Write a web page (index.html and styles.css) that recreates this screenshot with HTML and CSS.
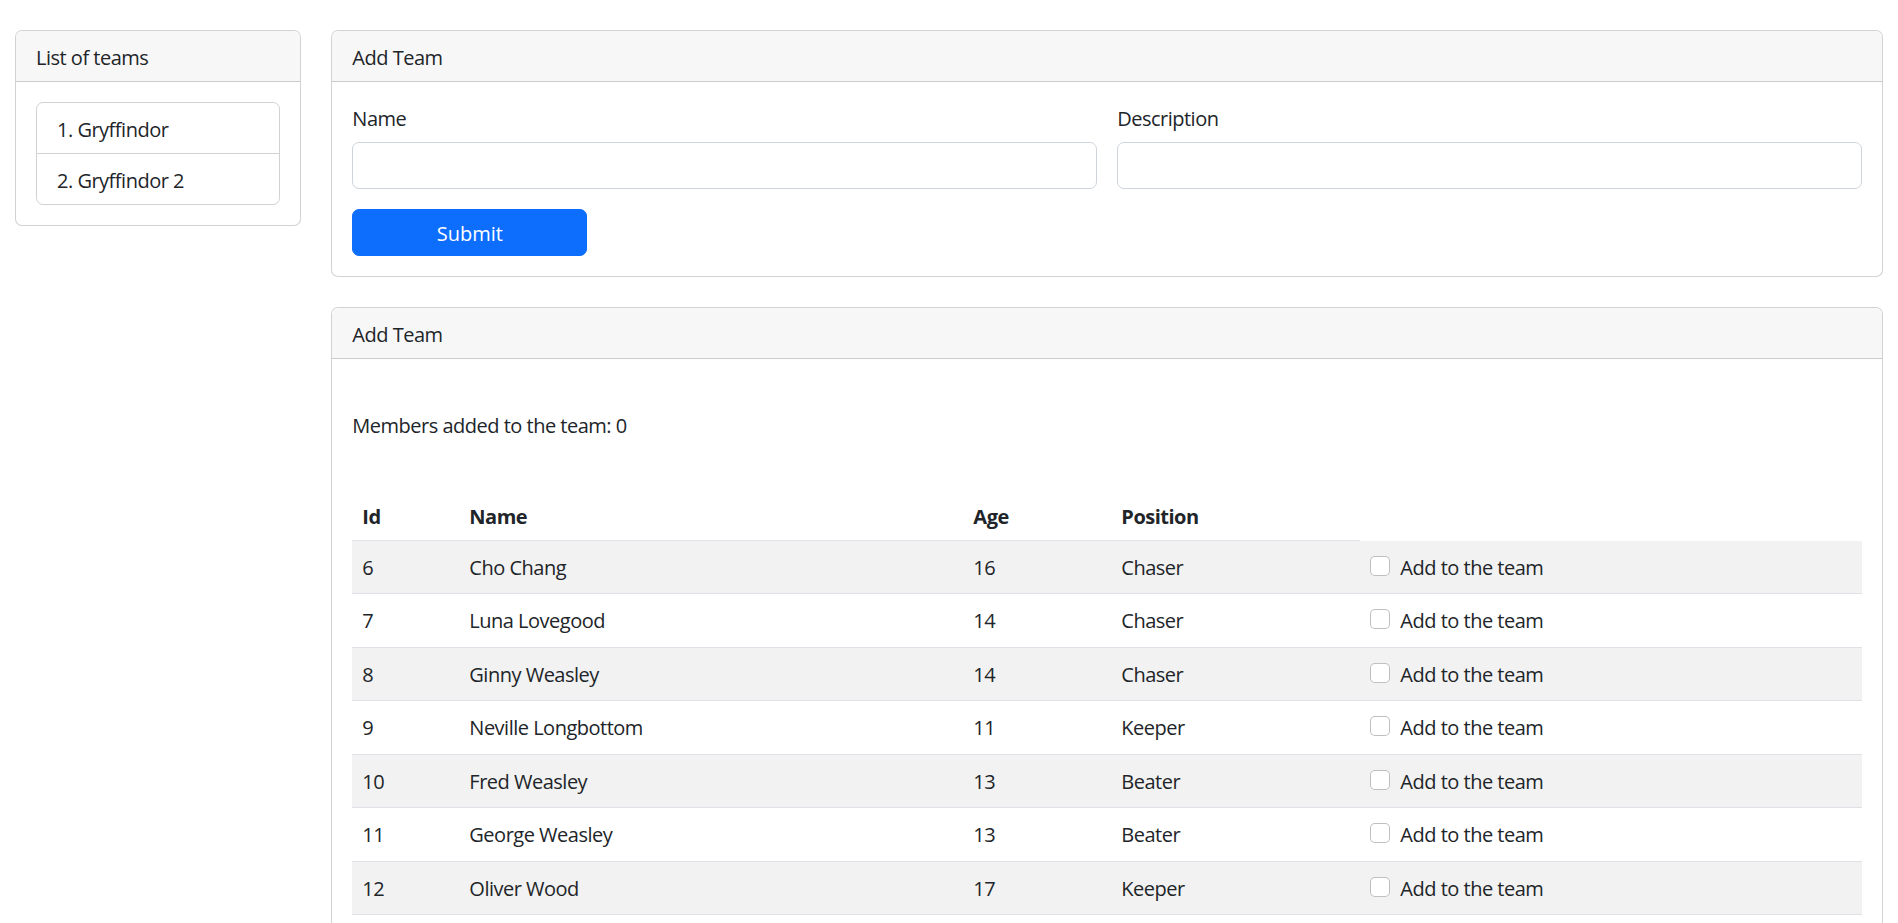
FILE: index.html
```html
<!DOCTYPE html>
<html lang="en">
<head>
<meta charset="utf-8">
<title>Teams</title>
<link rel="stylesheet" href="styles.css">
</head>
<body>
<div class="layout">
  <aside class="side">
    <div class="card">
      <div class="card-header">List of teams</div>
      <div class="card-body">
        <ol class="list-group">
          <li class="list-item">1. Gryffindor</li>
          <li class="list-item">2. Gryffindor 2</li>
        </ol>
      </div>
    </div>
  </aside>
  <main class="main">
    <div class="card">
      <div class="card-header">Add Team</div>
      <div class="card-body">
        <form class="team-form">
          <div class="form-row">
            <div class="field">
              <label class="form-label" for="name">Name</label>
              <input class="form-control" id="name" type="text">
            </div>
            <div class="field">
              <label class="form-label" for="desc">Description</label>
              <input class="form-control" id="desc" type="text">
            </div>
          </div>
          <button class="btn-primary" type="button">Submit</button>
        </form>
      </div>
    </div>

    <div class="card card-gap">
      <div class="card-header">Add Team</div>
      <div class="card-body">
        <p class="members">Members added to the team: 0</p>
        <table class="table">
          <colgroup>
            <col class="c-id"><col class="c-name"><col class="c-age"><col class="c-pos"><col>
          </colgroup>
          <thead>
            <tr><th>Id</th><th>Name</th><th>Age</th><th>Position</th></tr>
          </thead>
          <tbody>
            <tr><td>6</td><td>Cho Chang</td><td>16</td><td>Chaser</td><td><div class="form-check"><input class="check" type="checkbox" id="p6"><label for="p6">Add to the team</label></div></td></tr>
            <tr><td>7</td><td>Luna Lovegood</td><td>14</td><td>Chaser</td><td><div class="form-check"><input class="check" type="checkbox" id="p7"><label for="p7">Add to the team</label></div></td></tr>
            <tr><td>8</td><td>Ginny Weasley</td><td>14</td><td>Chaser</td><td><div class="form-check"><input class="check" type="checkbox" id="p8"><label for="p8">Add to the team</label></div></td></tr>
            <tr><td>9</td><td>Neville Longbottom</td><td>11</td><td>Keeper</td><td><div class="form-check"><input class="check" type="checkbox" id="p9"><label for="p9">Add to the team</label></div></td></tr>
            <tr><td>10</td><td>Fred Weasley</td><td>13</td><td>Beater</td><td><div class="form-check"><input class="check" type="checkbox" id="p10"><label for="p10">Add to the team</label></div></td></tr>
            <tr><td>11</td><td>George Weasley</td><td>13</td><td>Beater</td><td><div class="form-check"><input class="check" type="checkbox" id="p11"><label for="p11">Add to the team</label></div></td></tr>
            <tr><td>12</td><td>Oliver Wood</td><td>17</td><td>Keeper</td><td><div class="form-check"><input class="check" type="checkbox" id="p12"><label for="p12">Add to the team</label></div></td></tr>
          </tbody>
        </table>
      </div>
    </div>
  </main>
</div>
</body>
</html>
```
FILE: styles.css
```css
* { box-sizing: border-box; }

html { overflow: hidden; }

body {
  margin: 0;
  font-family: "Open Sans", "Noto Sans", sans-serif;
  font-size: 20px;
  line-height: 30px;
  letter-spacing: -0.5px;
  color: #212529;
  background: #fff;
}

.layout {
  display: flex;
  margin-top: 30px;
}

.side {
  width: 16.6667%;
  padding: 0 15px;
  flex: none;
}

.main {
  width: 83.3333%;
  padding: 0 15px;
  flex: none;
}

.card {
  border: 1px solid rgba(0, 0, 0, 0.175);
  border-radius: 7px;
  background: #fff;
  overflow: hidden;
}

.card-gap { margin-top: 30px; }

.card-header {
  padding: 12px 20px 8px;
  background: #f7f7f7;
  border-bottom: 1px solid rgba(0, 0, 0, 0.175);
}

.card-body { padding: 20px; }

.list-group {
  list-style: none;
  margin: 0;
  padding: 0;
  border: 1px solid rgba(0, 0, 0, 0.175);
  border-radius: 7px;
}

.list-item { padding: 12px 20px 8px; }
.list-item + .list-item { border-top: 1px solid rgba(0, 0, 0, 0.175); }

.form-row {
  display: grid;
  grid-template-columns: 1fr 1fr;
  column-gap: 20px;
}

.form-label {
  display: block;
  padding-top: 2px;
  margin-bottom: 8px;
}

.form-control {
  display: block;
  width: 100%;
  height: 47px;
  padding: 7px 15px;
  font: inherit;
  border: 1px solid #ced4da;
  border-radius: 7px;
  background: #fff;
}

.btn-primary {
  display: block;
  margin-top: 20px;
  width: 235px;
  height: 47px;
  font: inherit;
  color: #fff;
  background: #0d6efd;
  border: 1px solid #0d6efd;
  border-radius: 7px;
  padding: 3px 0 0;
}

.members { margin: 32px 0 49px; }

.table {
  width: 100%;
  border-collapse: collapse;
  table-layout: fixed;
}

.c-id { width: 107px; }
.c-name { width: 504px; }
.c-age { width: 148px; }
.c-pos { width: 249px; }

.table th,
.table td {
  padding: 12px 10px 8px;
  text-align: left;
  vertical-align: top;
  border-bottom: 1px solid #dee2e6;
}

.table th { font-weight: 700; }

.table tbody tr:nth-child(odd) td { background: #f2f2f2; }

.form-check {
  min-height: 30px;
  padding-left: 30px;
  margin-bottom: 2.5px;
}

.check {
  appearance: none;
  float: left;
  width: 20px;
  height: 20px;
  margin: 3px 0 0 -30px;
  border: 1px solid rgba(0, 0, 0, 0.25);
  border-radius: 5px;
  background: #fff;
}
```
